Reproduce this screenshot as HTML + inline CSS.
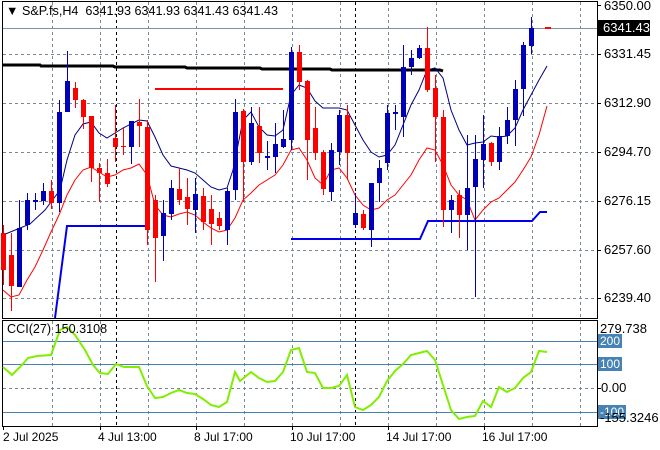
<!DOCTYPE html>
<html><head><meta charset="utf-8"><style>
body{margin:0;background:#fff;width:660px;height:450px;overflow:hidden;font-family:"Liberation Sans",sans-serif}
svg{position:absolute;left:0;top:0}
.l{position:absolute;font-size:13px;color:#000;line-height:14px;white-space:nowrap}
.d{font-size:12px}
.b{position:absolute;background:#4682b4;color:#fff;font-size:12px;line-height:14px;padding:0 2px}
</style></head><body>
<svg id="s" width="660" height="450" xmlns="http://www.w3.org/2000/svg"></svg>
<div class="l" style="left:6px;top:4px;font-size:12.6px">▼ S&amp;P.fs,H4&nbsp; 6341.93 6341.93 6341.43 6341.43</div>
<div class="l" style="left:604px;top:-1px">6350.00</div>
<div style="position:absolute;left:598px;top:20px;width:52px;height:16px;background:#000"></div>
<div class="l" style="left:603px;top:21px;color:#fff">6341.43</div>
<div class="l" style="left:604px;top:47px">6331.45</div>
<div class="l" style="left:604px;top:96px">6312.90</div>
<div class="l" style="left:604px;top:145px">6294.70</div>
<div class="l" style="left:604px;top:194px">6276.15</div>
<div class="l" style="left:604px;top:243px">6257.60</div>
<div class="l" style="left:604px;top:291px">6239.40</div>
<div class="l" style="left:600px;top:322px">279.738</div>
<div class="b" style="left:598px;top:334px">200</div>
<div class="b" style="left:598px;top:357px">100</div>
<div class="l" style="left:601px;top:381px">0.00</div>
<div class="b" style="left:598px;top:405px">-100</div>
<div class="l" style="left:600px;top:411px">-155.3246</div>
<div class="l" style="left:7px;top:322px;font-size:12.6px">CCI(27) 150.3108</div>
<div class="l d" style="left:3px;top:430px">2 Jul 2025</div>
<div class="l d" style="left:98px;top:430px">4 Jul 13:00</div>
<div class="l d" style="left:194px;top:430px">8 Jul 17:00</div>
<div class="l d" style="left:290px;top:430px">10 Jul 17:00</div>
<div class="l d" style="left:386px;top:430px">14 Jul 17:00</div>
<div class="l d" style="left:482px;top:430px">16 Jul 17:00</div>
<script>
var s=document.getElementById('s'),h='';
function L(x1,y1,x2,y2,c,w,d){h+='<line x1="'+x1+'" y1="'+y1+'" x2="'+x2+'" y2="'+y2+'" stroke="'+c+'" stroke-width="'+(w||1)+'"'+(d?' stroke-dasharray="'+d+'"':'')+'/>';}
function P(pts,c,w){h+='<polyline fill="none" stroke="'+c+'" stroke-width="'+w+'" points="'+pts.map(p=>p.join(',')).join(' ')+'"/>';}
[52,100,148,196,244,292,340,388,436,484,532,580].forEach(x=>{L(x+.5,2,x+.5,318,'#778899',1,'3,3');L(x+.5,321,x+.5,426,'#778899',1,'3,3');});
[54,103,152,201,250,298].forEach(y=>L(3,y+.5,597,y+.5,'#778899',1,'3,3'));
L(3,388.5,597,388.5,'#778899',1,'3,3');
L(116.5,2,116.5,426,'#000',1,'3,3');L(355.5,2,355.5,426,'#000',1,'3,3');
[341,364,412].forEach(y=>L(3,y+.5,597,y+.5,'#4682b4',1));
L(3,28.5,597,28.5,'#8090a0',1);
h+='<rect x="2.5" y="1.5" width="595" height="317" fill="none" stroke="#000"/>';
h+='<rect x="2.5" y="320.5" width="595" height="106" fill="none" stroke="#000"/>';
[5,54,103,152,201,250,298].forEach(y=>L(597,y+.5,601,y+.5,'#000'));
[388].forEach(y=>L(597,y+.5,601,y+.5,'#000'));
[3,100,196,292,388,484].forEach(x=>L(x+.5,426,x+.5,430,'#000'));
P([[3,65],[40,65],[41,66],[113,66],[115,67],[185,67],[187,68],[260,68],[262,69],[330,69],[332,70],[440,70],[443,71]],'#000',3);
L(155,89,283,89,'#ff0000',2);
P([[55,318],[67,226],[147,226]],'#0000ee',2);
P([[291,239],[420,239],[428,221],[532,221],[540,212],[547,212]],'#0000ee',2);
P([[3,235],[30,224],[45,210],[60,190],[67,160],[75,135],[83,124],[91,122],[99,133],[107,138],[115,133],[123,128],[131,124],[139,120],[147,121],[155,137],[163,155],[171,166],[179,168],[187,170],[195,173],[203,180],[211,187],[219,190],[227,188],[233,170],[243,120],[251,112],[259,127],[267,135],[275,136],[283,130],[291,95],[299,85],[307,88],[315,101],[323,108],[331,108],[339,108],[347,110],[355,125],[363,140],[371,152],[379,157],[387,155],[395,145],[403,125],[411,105],[419,90],[427,70],[435,68],[443,78],[451,110],[459,130],[467,145],[475,143],[483,142],[491,136],[499,137],[507,136],[515,128],[523,110],[531,95],[539,80],[547,66]],'#000080',1);
P([[3,290],[11,297],[19,295],[27,280],[35,267],[43,250],[51,232],[59,215],[67,195],[75,180],[83,170],[91,167],[99,172],[107,177],[115,175],[123,170],[131,168],[139,164],[147,175],[155,205],[163,215],[171,217],[179,214],[187,212],[195,215],[203,222],[211,228],[219,232],[227,230],[235,218],[243,200],[251,193],[259,185],[267,180],[275,175],[283,165],[291,150],[299,148],[307,160],[315,178],[323,185],[331,170],[339,168],[347,178],[355,195],[363,205],[371,210],[379,208],[387,200],[395,195],[403,185],[411,175],[419,160],[427,148],[435,150],[443,165],[451,185],[459,195],[467,200],[475,220],[483,210],[491,202],[499,198],[507,190],[515,182],[523,170],[531,157],[539,135],[547,106]],'#ff0000',1);
var C=[['r',233,270,225,285],['r',255,286,233,311],['b',228,287,200,287],['b',200,225,193,230],['b',200,202,193,210],['b',191,201,183,205],['r',191,203,180,209],['b',112,203,100,212],['b',81,112,51,112],['r',88,100,82,108],['r',100,117,99,129],['r',116,168,116,182],['r',168,173,163,202],['r',173,184,159,187],['r',138,147,105,162],['r',146,147,128,155],['b',121,147,121,164],['r',122,126,99,147],['r',127,230,120,245],['r',200,238,195,282],['b',213,236,200,261],['b',188,214,180,220],['r',189,200,168,205],['r',197,209,178,225],['b',194,210,178,233],['r',196,222,188,230],['r',209,224,195,245],['r',218,226,212,230],['b',191,230,188,245],['b',112,190,99,200],['r',111,162,109,202],['b',123,162,107,165],['r',126,153,107,163],['b',156,158,141,170],['b',144,157,123,173],['b',139,147,110,148],['b',52,140,47,150],['r',52,82,45,90],['r',81,140,80,180],['r',128,153,107,160],['r',152,189,150,195],['b',150,192,143,201],['b',115,152,110,165],['r',115,153,105,180],['b',213,225,193,228],['r',214,228,210,230],['b',183,230,183,247],['b',168,183,160,202],['b',113,163,105,170],['b',112,114,105,130],['b',67,117,45,137],['b',58,67,50,75],['b',48,58,45,59],['r',48,90,27,92],['r',88,117,75,162],['r',117,210,110,227],['b',200,210,195,233],['r',195,215,190,238],['b',188,215,135,250],['b',159,187,135,297],['b',144,160,115,188],['r',143,162,142,166],['b',136,162,127,170],['b',120,136,107,144],['b',89,120,80,146],['b',45,89,42,116],['b',28,46,17,54],['r',27,29,27,29]];
C.forEach((c,i)=>{var x=3+8*i,col=c[0]=='r'?'#ff0000':'#0000b8';
if(i==67){h+='<rect x="545" y="27" width="6" height="2" fill="#ff0000"/>';return;}
L(x+.5,c[3],x+.5,c[4],col,1);h+='<rect x="'+(x-2)+'" y="'+c[1]+'" width="5" height="'+Math.max(1,c[2]-c[1])+'" fill="'+col+'"/>';});
P([[3,367],[12,375],[22,365],[28,358],[37,356],[51,355],[60,330],[67,327],[75,335],[85,350],[93,365],[100,373],[108,374],[116,364],[124,367],[139,367],[147,386],[155,398],[163,397],[171,393],[179,390],[187,393],[195,394],[203,399],[211,405],[219,407],[227,402],[235,372],[240,381],[251,372],[259,378],[267,382],[275,381],[283,372],[291,350],[299,348],[307,372],[315,373],[323,388],[331,388],[339,386],[347,375],[355,407],[363,410],[371,405],[379,397],[387,381],[395,371],[403,364],[411,355],[419,353],[427,351],[435,360],[443,385],[451,410],[459,419],[467,417],[475,416],[483,401],[491,407],[499,387],[507,392],[515,388],[523,378],[531,372],[539,351],[547,352]],'#80ee00',2);
s.innerHTML=h;
</script>
</body></html>
